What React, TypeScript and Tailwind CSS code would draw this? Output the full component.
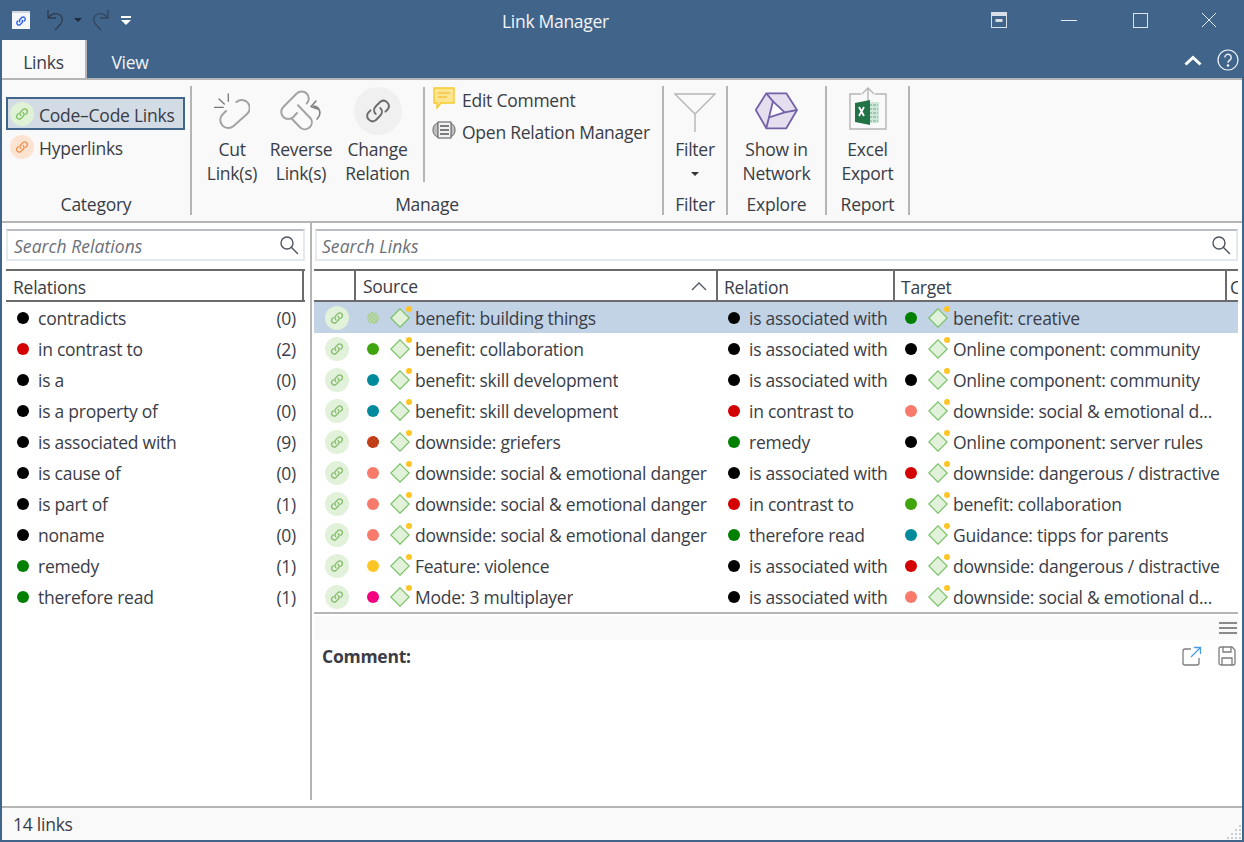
import React from "react";

const Chain = ({ c = "#7fb566", s = 14, w = 1.3 }: { c?: string; s?: number; w?: number }) => (
  <svg width={s} height={s} viewBox="0 0 24 24" fill="none" stroke={c} strokeWidth={w * 24 / s} strokeLinecap="round" strokeLinejoin="round">
    <path d="M10 14.5a4.6 4.6 0 0 1 0-6.4l4-4a4.6 4.6 0 0 1 6.4 6.4l-2 2" />
    <path d="M14 9.5a4.6 4.6 0 0 1 0 6.4l-4 4a4.6 4.6 0 0 1-6.4-6.4l2-2" />
  </svg>
);

const LinkBadge = ({ bg = "bg-[#e2f1da]", c = "#84bb6b" }: { bg?: string; c?: string }) => (
  <span className={`flex h-6 w-6 shrink-0 items-center justify-center rounded-full ${bg}`}>
    <Chain c={c} />
  </span>
);

const Dot = ({ c, speckle }: { c: string; speckle?: string }) =>
  speckle ? (
    <svg width="12" height="12" viewBox="0 0 12 12" className="block shrink-0">
      <circle cx="6" cy="6" r="6" fill={c} />
      {[1, 3, 5, 7, 9, 11].map((y) =>
        [1, 3, 5, 7, 9, 11].map((x) =>
          (x + y) % 4 === 0 && (x - 6) * (x - 6) + (y - 6) * (y - 6) < 32 ? (
            <rect key={`${x}-${y}`} x={x - 0.6} y={y - 0.6} width="1.2" height="1.2" fill={speckle} />
          ) : null
        )
      )}
    </svg>
  ) : (
    <span className="block h-3 w-3 shrink-0 rounded-full" style={{ backgroundColor: c }} />
  );

const Code = () => (
  <span className="relative block h-5 w-5 shrink-0">
    <svg width="20" height="20" viewBox="0 0 20 20" className="absolute left-0 top-0">
      <path d="M10 .8 19.2 10 10 19.2 .8 10Z" fill="#e2f1da" stroke="#79c267" strokeWidth="1.2" />
    </svg>
    <span className="absolute -right-[2px] -top-[2px] h-[6px] w-[6px] rounded-full bg-[#fdc525]" />
  </span>
);

const Search = () => (
  <svg width="20" height="20" viewBox="0 0 20 20" fill="none" stroke="#4f5560" strokeWidth="1.4" strokeLinecap="round">
    <circle cx="8" cy="8" r="6" />
    <path d="M12.5 12.5 18.5 18.5" />
  </svg>
);

const relations: [string, string, number][] = [
  ["contradicts", "#000000", 0],
  ["in contrast to", "#d40000", 2],
  ["is a", "#000000", 0],
  ["is a property of", "#000000", 0],
  ["is associated with", "#000000", 9],
  ["is cause of", "#000000", 0],
  ["is part of", "#000000", 1],
  ["noname", "#000000", 0],
  ["remedy", "#008000", 1],
  ["therefore read", "#008000", 1],
];

const GREEN = "#3fa40e";
const TEAL = "#008a9b";
const SALMON = "#f77a6a";
const RED = "#d40000";
const DKGREEN = "#008000";
const BLACK = "#000000";

const links: [string, string, string, string, string, string, string?][] = [
  ["#a9cf97", "benefit: building things", BLACK, "is associated with", DKGREEN, "benefit: creative", "#d4e4d2"],
  [GREEN, "benefit: collaboration", BLACK, "is associated with", BLACK, "Online component: community"],
  [TEAL, "benefit: skill development", BLACK, "is associated with", BLACK, "Online component: community"],
  [TEAL, "benefit: skill development", RED, "in contrast to", SALMON, "downside: social & emotional d..."],
  ["#d2401a", "downside: griefers", DKGREEN, "remedy", BLACK, "Online component: server rules", "#6e3a12"],
  [SALMON, "downside: social & emotional danger", BLACK, "is associated with", RED, "downside: dangerous / distractive"],
  [SALMON, "downside: social & emotional danger", RED, "in contrast to", GREEN, "benefit: collaboration"],
  [SALMON, "downside: social & emotional danger", DKGREEN, "therefore read", TEAL, "Guidance: tipps for parents"],
  ["#fdc525", "Feature: violence", BLACK, "is associated with", RED, "downside: dangerous / distractive"],
  ["#f5007f", "Mode: 3 multiplayer", BLACK, "is associated with", SALMON, "downside: social & emotional d..."],
];

const RibbonLabel = ({ children }: { children: React.ReactNode }) => (
  <div className="flex h-[30px] shrink-0 items-start justify-center pt-[2px] leading-[22px]">{children}</div>
);

const Sep = () => <div className="my-[6px] w-[2px] shrink-0 bg-[#b5b5b5]" />;

const BigBtn = ({ icon, l1, l2, w }: { icon: React.ReactNode; l1: string; l2: React.ReactNode; w: string }) => (
  <div className={`flex shrink-0 flex-col items-center ${w}`}>
    <div className="flex h-[50px] items-center justify-center">{icon}</div>
    <div className="mt-[1px] text-center leading-[24px]">
      <div>{l1}</div>
      <div>{l2}</div>
    </div>
  </div>
);

export default function App() {
  return (
    <div
      className="flex h-[842px] w-[1244px] flex-col overflow-hidden bg-[#41648b] px-[2px] pb-[2px] text-[17.5px] tracking-[-0.25px] text-[#3a3d46]"
      style={{ fontFamily: '"Open Sans", "Noto Sans", sans-serif' }}
    >
      {/* title bar */}
      <div className="flex h-[40px] shrink-0 items-center text-white">
        <svg width="20" height="20" viewBox="0 0 20 20" className="ml-[9px]">
          <rect x="1" y="1" width="18" height="18" fill="#f4f6fa" />
          <rect x="1" y="1" width="18" height="2" fill="#d4d8de" />
          <g transform="translate(4.5 5.5) scale(0.46)">
            <path d="M10 14.5a4.6 4.6 0 0 1 0-6.4l4-4a4.6 4.6 0 0 1 6.4 6.4l-2 2M14 9.5a4.6 4.6 0 0 1 0 6.4l-4 4a4.6 4.6 0 0 1-6.4-6.4l2-2" fill="none" stroke="#2f62e6" strokeWidth="3" />
          </g>
        </svg>
        <svg width="20" height="22" viewBox="0 0 20 22" fill="none" stroke="#2f3b4c" strokeWidth="1.3" className="ml-[15px]">
          <path d="M2 1v8h8M2 9c3-4 8-6 12-3 4 3 2 8-1 11l-4 4" />
        </svg>
        <span className="ml-[8px] h-0 w-0 border-x-[4px] border-t-[4px] border-x-transparent border-t-[#1f2a3a]" />
        <svg width="20" height="22" viewBox="0 0 20 22" fill="none" stroke="#33465f" strokeWidth="1.3" className="ml-[8px]">
          <path d="M18 1v8h-8M18 9c-3-4-8-6-12-3-4 3-2 8 1 11l4 4" />
        </svg>
        <span className="ml-[11px] flex flex-col items-center gap-[2px]">
          <span className="h-[2px] w-[10px] bg-white" />
          <span className="h-0 w-0 border-x-[5px] border-t-[5px] border-x-transparent border-t-white" />
        </span>
        <span className="ml-[371px] w-[106px] whitespace-nowrap pt-[3px] text-center tracking-[-0.3px] text-[#f2f5f8]">Link Manager</span>
        <svg width="16" height="16" viewBox="0 0 16 16" className="ml-[383px]">
          <rect x="0.5" y="0.5" width="15" height="15" fill="none" stroke="#d8dfe7" />
          <rect x="0" y="0" width="16" height="4" fill="#d8dfe7" />
          <rect x="4.5" y="7" width="7" height="3" fill="#d8dfe7" />
        </svg>
        <span className="ml-[54px] h-[1px] w-[16px] bg-[#e5eaf0]" />
        <span className="ml-[56px] h-[15px] w-[15px] border border-[#dfe5ec]" />
        <svg width="16" height="16" viewBox="0 0 16 16" stroke="#e5eaf0" strokeWidth="1" className="ml-[53px]">
          <path d="M1 1 15 15M15 1 1 15" />
        </svg>
      </div>

      {/* tabs */}
      <div className="flex h-[38px] shrink-0 items-stretch">
        <div className="flex w-[85px] items-center justify-center border-r-2 border-[#b5b5b5] bg-[#f9f9f9] pt-[6px]">Links</div>
        <div className="flex w-[86px] items-center justify-center pt-[6px] text-[#f2f5f8]">View</div>
        <div className="flex-1" />
        <div className="flex items-center gap-[15px] pr-[3px] pt-[2px]">
          <svg width="18" height="11" viewBox="0 0 18 11" fill="none" stroke="#fff" strokeWidth="3">
            <path d="M1.5 9.5 9 2.5 16.5 9.5" />
          </svg>
          <svg width="22" height="22" viewBox="0 0 22 22" fill="none" stroke="#f2f5f8" strokeWidth="1.2">
            <circle cx="11" cy="11" r="10" />
            <path d="M7.8 8.5a3.2 3.2 0 1 1 5 2.6c-1.2.8-1.8 1.4-1.8 2.6" strokeWidth="1.4" />
            <circle cx="11" cy="16.5" r="0.7" fill="#f2f5f8" />
          </svg>
        </div>
      </div>

      {/* content surface */}
      <div className="flex min-h-0 flex-1 flex-col border-t-2 border-[#b5b5b5] bg-white">
        {/* ribbon */}
        <div className="flex h-[143px] shrink-0 border-b-2 border-[#b5b5b5] bg-[#f9f9f9]">
          {/* category */}
          <div className="flex w-[188px] shrink-0 flex-col">
            <div className="flex-1 pl-[4px] pt-[17px]">
              <div className="flex h-[33px] w-[179px] items-center border-2 border-[#41648b] bg-[#d3dbe5] pl-[2px]">
                <LinkBadge bg="bg-[#dff2d6]" c="#7fc062" />
                <span className="ml-[5px] pt-[3px]">Code–Code Links</span>
              </div>
              <div className="flex h-[33px] items-center pl-[4px]">
                <LinkBadge bg="bg-[#fde3d2]" c="#ee9350" />
                <span className="ml-[5px] pt-[3px]">Hyperlinks</span>
              </div>
            </div>
            <RibbonLabel>Category</RibbonLabel>
          </div>
          <Sep />
          {/* manage */}
          <div className="flex w-[470px] shrink-0 flex-col">
            <div className="flex flex-1 pt-[6px]">
              <BigBtn
                w="w-[80px]"
                l1="Cut"
                l2="Link(s)"
                icon={
                  <svg width="36" height="38" viewBox="0 0 36 38" fill="none" strokeLinecap="round">
                    <path d="M14.3 2v7.3M0.5 15.3h8.8M5 7l5.3 5" stroke="#777" strokeWidth="1.3" />
                    <path d="M22.4 10A8 8 0 0 1 33 22L19.6 34A8 8 0 0 1 9 22l3-3" stroke="#a3a3a3" strokeWidth="2" />
                  </svg>
                }
              />
              <BigBtn
                w="w-[58px]"
                l1="Reverse"
                l2="Link(s)"
                icon={
                  <svg width="44" height="43" viewBox="0 0 44 43" fill="none" strokeLinecap="round" strokeLinejoin="round">
                    <path d="M27.7 13.5A7 7 0 0 0 17.7 3.5L4.3 17A7 7 0 0 0 14.3 27L18 23" stroke="#a3a3a3" strokeWidth="2" />
                    <path d="M19 15.2 31.5 28.2A7 7 0 0 1 21.5 37.8L13 29" stroke="#a3a3a3" strokeWidth="2" />
                    <path d="M35 16C41 17 43 24 38 29M37 11 32 16.5 38.5 19" stroke="#808080" strokeWidth="1.6" />
                  </svg>
                }
              />
              <BigBtn
                w="w-[93px] ml-[1px]"
                l1="Change"
                l2="Relation"
                icon={
                  <span className="flex h-12 w-12 items-center justify-center rounded-full bg-[#f0f0f0]">
                    <Chain c="#6e6e6e" s={28} w={2} />
                  </span>
                }
              />
              <div className="-ml-[1px] mb-[9px] mt-[1px] w-[2px] bg-[#b5b5b5]" />
              <div className="-mt-[5px] ml-[8px] flex flex-col">
                <div className="flex h-[33px] items-center">
                  <svg width="22" height="22" viewBox="0 0 22 22">
                    <path d="M1 1h20v15H8l-4 5v-5H1Z" fill="#fde48f" stroke="#f8c92a" strokeWidth="1.4" />
                    <path d="M5 6h12M5 10h9" stroke="#eeb420" strokeWidth="1.2" />
                  </svg>
                  <span className="ml-[7px] pt-[5px]">Edit Comment</span>
                </div>
                <div className="flex h-[33px] items-center">
                  <svg width="24" height="20" viewBox="0 0 24 20" className="-ml-[1px]">
                    <rect x="1" y="2" width="22" height="14" rx="6" fill="#bdbdbd" stroke="#6e6e6e" />
                    <rect x="6" y="1" width="13" height="16" fill="#f2f2f2" stroke="#555" />
                    <path d="M8 5h9M8 9h9M8 13h9" stroke="#555" strokeWidth="1.4" />
                  </svg>
                  <span className="ml-[6px] pt-[4px]">Open Relation Manager</span>
                </div>
              </div>
            </div>
            <RibbonLabel>Manage</RibbonLabel>
          </div>
          <Sep />
          {/* filter */}
          <div className="flex w-[62px] shrink-0 flex-col">
            <div className="flex flex-1 flex-col items-center pt-[13px]">
              <svg width="42" height="39" viewBox="0 0 42 39" fill="none" stroke="#b5b5b5" strokeWidth="1.4">
                <path d="M1 1h40L21 21ZM21 21v18" />
              </svg>
              <div className="mt-[5px] leading-[24px]">Filter</div>
              <span className="mt-[11px] h-0 w-0 border-x-[4px] border-t-[4px] border-x-transparent border-t-[#333]" />
            </div>
            <RibbonLabel>Filter</RibbonLabel>
          </div>
          <Sep />
          {/* explore */}
          <div className="flex w-[97px] shrink-0 flex-col">
            <div className="flex flex-1 flex-col items-center pt-[12px]">
              <svg width="43" height="38" viewBox="0 0 43 38" fill="#e4deef" stroke="#7561a8" strokeWidth="1.8" strokeLinejoin="round">
                <path d="M11.3 1.3h20L42 18 31.3 36.3h-20L.8 18Z" />
                <path d="M18 9.3 29.7 20.3 14 25.3Z" fill="#fbfaff" />
                <path d="M11.3 1.3 18 9.3M29.7 20.3 42 18M14 25.3 11.3 36.3" fill="none" />
              </svg>
              <div className="mt-[7px] text-center leading-[24px]">
                <div>Show in</div>
                <div>Network</div>
              </div>
            </div>
            <RibbonLabel>Explore</RibbonLabel>
          </div>
          <Sep />
          {/* report */}
          <div className="flex w-[81px] shrink-0 flex-col">
            <div className="flex flex-1 flex-col items-center pt-[7px]">
              <svg width="38" height="45" viewBox="0 0 38 45">
                <path d="M12 7H1v35h36V7H26M19 20V1M13 7l6-6 6 6" fill="none" stroke="#b5b5b5" strokeWidth="1.4" />
                <rect x="18" y="15" width="12" height="21" fill="#cfe6d9" />
                <path d="M20 18h9M20 22h9M20 26h9M20 30h9M20 34h9" stroke="#8fbfa6" strokeWidth="1.6" strokeDasharray="3 1" />
                <path d="M6 16 21 13v25L6 35Z" fill="#217346" />
                <path d="M10 20l5 9M15 20l-5 9" stroke="#fff" strokeWidth="1.8" />
              </svg>
              <div className="mt-[5px] text-center leading-[24px]">
                <div>Excel</div>
                <div>Export</div>
              </div>
            </div>
            <RibbonLabel>Report</RibbonLabel>
          </div>
          <Sep />
        </div>

        {/* lists */}
        <div className="flex min-h-0 flex-1">
          {/* left */}
          <div className="flex w-[308px] shrink-0 flex-col pl-[4px] pr-[5px] pt-[6px]">
            <div className="flex h-[32px] items-center justify-between border-2 border-[#e4e8ef] border-t-[#b9bdc4] pl-[6px] pr-[4px]">
              <span className="pt-[3px] italic tracking-[0.05px] text-[#6c7078]">Search Relations</span>
              <Search />
            </div>
            <div className="mt-[8px] flex h-[33px] border-y-2 border-[#6b6b6b]">
              <div className="flex-1 border-r-2 border-[#6b6b6b] pl-[7px] leading-[32px]">Relations</div>
              <div className="w-[1px]" />
            </div>
            <div>
              {relations.map(([name, c, n]) => (
                <div key={name} className="flex h-[31px] items-center pl-[11px] pr-[9px] pt-[1px]">
                  <Dot c={c} />
                  <span className="ml-[9px] flex-1">{name}</span>
                  <span>({n})</span>
                </div>
              ))}
            </div>
          </div>
          <div className="mb-[6px] w-[2px] shrink-0 bg-[#b5b5b5]" />
          {/* right */}
          <div className="flex min-w-0 flex-1 flex-col pl-[2px] pr-[4px] pt-[6px]">
            <div className="ml-[1px] flex h-[32px] items-center justify-between border-2 border-[#e4e8ef] border-t-[#b9bdc4] pl-[5px] pr-[5px]">
              <span className="pt-[3px] italic tracking-[0.05px] text-[#6c7078]">Search Links</span>
              <Search />
            </div>
            <div className="mt-[8px] flex h-[33px] shrink-0 overflow-hidden border-y-2 border-[#6b6b6b] leading-[32px]">
              <div className="w-[42px] border-r-2 border-[#6b6b6b]" />
              <div className="flex w-[362px] items-center justify-between border-r-2 border-[#6b6b6b] pl-[7px] pr-[9px] pt-[1px]">
                <span>Source</span>
                <svg width="16" height="9" viewBox="0 0 16 9" fill="none" stroke="#4f5560" strokeWidth="1.3">
                  <path d="M1 8 8 1l7 7" />
                </svg>
              </div>
              <div className="w-[177px] border-r-2 border-[#6b6b6b] pl-[6px]">Relation</div>
              <div className="w-[332px] border-r-2 border-[#6b6b6b] pl-[6px]">Target</div>
              <div className="flex-1 overflow-hidden pl-[3px]">C</div>
            </div>
            <div>
              {links.map(([d1, s, d2, r, d3, t, sp], i) => (
                <div key={i} className={`flex h-[31px] items-center pt-[1px] ${i === 0 ? "bg-[#c2d3e6]" : ""}`}>
                  <div className="flex w-[41px] shrink-0 justify-center pl-[4px]">
                    <LinkBadge />
                  </div>
                  <div className="flex w-[362px] shrink-0 items-center">
                    <span className="ml-[12px]"><Dot c={d1} speckle={sp} /></span>
                    <span className="ml-[11px]"><Code /></span>
                    <span className="ml-[5px] truncate">{s}</span>
                  </div>
                  <div className="flex w-[177px] shrink-0 items-center pl-[11px]">
                    <Dot c={d2} />
                    <span className="ml-[9px]">{r}</span>
                  </div>
                  <div className="flex min-w-0 flex-1 items-center">
                    <span className="ml-[11px]"><Dot c={d3} /></span>
                    <span className="ml-[11px]"><Code /></span>
                    <span className="ml-[5px] truncate">{t}</span>
                  </div>
                </div>
              ))}
            </div>
            <div className="shrink-0 border-t-2 border-[#b5b5b5] pt-[2px]">
              <div className="flex h-[24px] items-center justify-end bg-[#f9f9f9] pr-[1px]">
                <span className="flex flex-col gap-[3px]">
                  <span className="block h-[2px] w-[18px] bg-[#8a8a8a]" />
                  <span className="block h-[2px] w-[18px] bg-[#8a8a8a]" />
                  <span className="block h-[2px] w-[18px] bg-[#8a8a8a]" />
                </span>
              </div>
            </div>
            <div className="flex h-[32px] shrink-0 items-center justify-between pl-[8px] pr-[2px]">
              <span className="font-bold">Comment:</span>
              <span className="flex items-center gap-[16px]">
                <svg width="20" height="20" viewBox="0 0 20 20" fill="none" strokeWidth="1.3">
                  <path d="M9 3H3a2 2 0 0 0-2 2v12a2 2 0 0 0 2 2h12a2 2 0 0 0 2-2v-5" stroke="#7d7d7d" />
                  <path d="M9 11 18 2M12 1.5h6.5V8" stroke="#4a9be0" />
                </svg>
                <svg width="18" height="20" viewBox="0 0 18 20" fill="none" stroke="#7d7d7d" strokeWidth="1.3">
                  <path d="M1 3a2 2 0 0 1 2-2h11l3 3v13a2 2 0 0 1-2 2H3a2 2 0 0 1-2-2Z" />
                  <path d="M5 1v5h8V1M4 19v-7h10v7" />
                </svg>
              </span>
            </div>
          </div>
        </div>

        {/* status */}
        <div className="flex h-[34px] shrink-0 items-center justify-between border-t-2 border-[#b5b5b5] bg-[#f9f9f9] pl-[11px]">
          <span className="pt-[1px]">14 links</span>
          <svg width="16" height="16" viewBox="0 0 16 16" fill="#c5cdd8" className="self-end">
            <path d="M13 1h2v2h-2zM9 5h2v2H9zM13 5h2v2h-2zM5 9h2v2H5zM9 9h2v2H9zM13 9h2v2h-2zM1 13h2v2H1zM5 13h2v2H5zM9 13h2v2H9zM13 13h2v2h-2z" />
          </svg>
        </div>
      </div>
    </div>
  );
}
